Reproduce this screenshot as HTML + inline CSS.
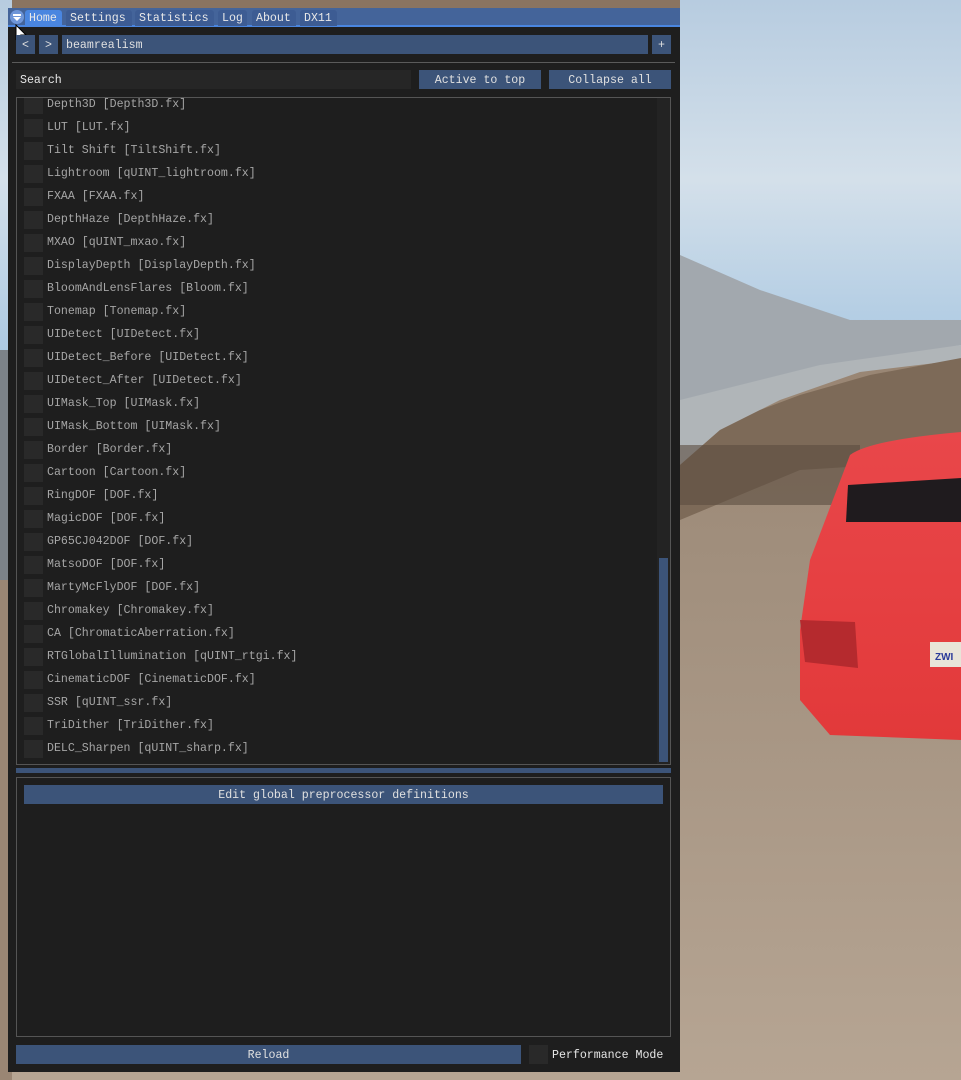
<!DOCTYPE html>
<html><head><meta charset="utf-8">
<style>
*{margin:0;padding:0;box-sizing:border-box}
body{width:961px;height:1080px;overflow:hidden;position:relative;background:#8a7a68;font-family:"Liberation Mono","DejaVu Sans Mono",monospace;font-size:11.6px;color:#e6e6e6}
.abs{position:absolute}
.win{left:8px;top:8px;width:672px;height:1064px;background:#1e1e1e}
.title{left:8px;top:8px;width:672px;height:19px;background:#44649a;border-bottom:2px solid #4a86e0}
.tab{position:absolute;top:10px;height:16px;background:#3d5c93;border-radius:3px 3px 0 0;color:#e8e8e8;line-height:17px;padding-left:4px}
.btn{position:absolute;background:#3c5479;color:#e0e0e0;text-align:center;line-height:21px;height:19px}
.item{position:absolute;left:24px;height:18px;width:640px;color:#a6a6a6;line-height:18px}
.item i{position:absolute;left:0;top:0;width:19px;height:18px;background:#292929}
.item span{position:absolute;left:23px;top:0;white-space:pre}
</style></head><body>
<svg class="abs" style="left:0;top:0" width="961" height="1080">
<defs>
<linearGradient id="sky" x1="0" y1="0" x2="0" y2="1"><stop offset="0" stop-color="#b7cce0"/><stop offset="0.5" stop-color="#d4e0ea"/><stop offset="1" stop-color="#aac8e2"/></linearGradient>
<linearGradient id="road" x1="0" y1="0" x2="0" y2="1"><stop offset="0" stop-color="#8a7461"/><stop offset="0.5" stop-color="#a08e7c"/><stop offset="1" stop-color="#b6a593"/></linearGradient>
<linearGradient id="car" x1="0" y1="0" x2="0" y2="1"><stop offset="0" stop-color="#e9474a"/><stop offset="1" stop-color="#e2393a"/></linearGradient>
</defs>
<rect width="961" height="1080" fill="url(#road)"/>
<rect x="680" y="0" width="281" height="360" fill="url(#sky)"/>
<rect x="0" y="0" width="12" height="360" fill="url(#sky)"/>
<polygon points="680,255 760,290 850,320 961,320 961,345 880,360 820,370 750,400 680,440" fill="#a2a8ae"/>
<polygon points="680,400 740,385 820,365 961,345 961,360 860,372 780,400 720,430 680,465" fill="#b0b5b8"/>
<polygon points="680,465 720,430 760,410 800,395 870,375 961,358 961,460 800,470 680,520" fill="#7d6a58"/>
<rect x="680" y="445" width="180" height="60" fill="#5b4d40" opacity="0.6"/>
<rect x="0" y="350" width="12" height="230" fill="#7c8288"/>
<rect x="0" y="580" width="12" height="500" fill="#9a8674"/>
<path d="M850,455 Q870,440 961,432 L961,740 L830,735 L800,700 L800,630 L810,560 Z" fill="url(#car)"/>
<path d="M848,485 L961,478 L961,522 L846,522 Z" fill="#1f1b1e"/>
<path d="M800,620 L855,622 L858,668 L805,662 Z" fill="#b52a2e"/>
<rect x="930" y="642" width="31" height="25" fill="#e8e4d8"/>
<text x="935" y="660" font-family="Liberation Sans" font-size="10" font-weight="bold" fill="#2a3a9a">ZWI</text>
</svg>
<div class="abs win"></div>
<div class="abs title"></div>
<div class="abs" style="left:10px;top:10px;width:14px;height:14px;border-radius:50%;background:#6f96d8"></div>
<div class="abs" style="left:13px;top:14px;width:8px;height:2px;background:#fff"></div>
<div class="abs" style="left:13px;top:17px;width:0;height:0;border-left:4px solid transparent;border-right:4px solid transparent;border-top:4px solid #fff"></div>
<div class="tab" style="left:25px;width:37px;background:#4a86e0">Home</div>
<div class="tab" style="left:66px;width:66px">Settings</div>
<div class="tab" style="left:135px;width:79px">Statistics</div>
<div class="tab" style="left:218px;width:29px">Log</div>
<div class="tab" style="left:252px;width:44px">About</div>
<div class="tab" style="left:300px;width:37px">DX11</div>
<svg class="abs" style="left:15px;top:24px" width="14" height="18"><path d="M1,1 L1,15 L4,12 L7,18 L9,17 L6,11 L11,11 Z" fill="#fff" stroke="#000" stroke-width="1"/></svg>
<div class="btn" style="left:16px;top:35px;width:19px">&lt;</div>
<div class="btn" style="left:39px;top:35px;width:19px">&gt;</div>
<div class="btn" style="left:62px;top:35px;width:586px;text-align:left;padding-left:4px">beamrealism</div>
<div class="btn" style="left:652px;top:35px;width:19px">+</div>
<div class="abs" style="left:12px;top:62px;width:663px;height:1px;background:#5a5a5a"></div>
<div class="abs" style="left:16px;top:70px;width:395px;height:19px;background:#262626;line-height:21px;padding-left:4px;color:#e6e6e6">Search</div>
<div class="btn" style="left:419px;top:70px;width:122px">Active to top</div>
<div class="btn" style="left:549px;top:70px;width:122px">Collapse all</div>
<div class="abs" style="left:16px;top:97px;width:655px;height:668px;border:1px solid #555;overflow:hidden">
 <div class="abs" style="left:640px;top:0;width:14px;height:666px;background:#232323"></div>
 <div class="abs" style="left:642px;top:460px;width:9px;height:204px;background:#3c5479"></div>
 <div style="position:absolute;left:-17px;top:-98px;width:700px;height:900px">
 <div class="item" style="top:96px"><i></i><span>Depth3D [Depth3D.fx]</span></div>
 <div class="item" style="top:119px"><i></i><span>LUT [LUT.fx]</span></div>
 <div class="item" style="top:142px"><i></i><span>Tilt Shift [TiltShift.fx]</span></div>
 <div class="item" style="top:165px"><i></i><span>Lightroom [qUINT_lightroom.fx]</span></div>
 <div class="item" style="top:188px"><i></i><span>FXAA [FXAA.fx]</span></div>
 <div class="item" style="top:211px"><i></i><span>DepthHaze [DepthHaze.fx]</span></div>
 <div class="item" style="top:234px"><i></i><span>MXAO [qUINT_mxao.fx]</span></div>
 <div class="item" style="top:257px"><i></i><span>DisplayDepth [DisplayDepth.fx]</span></div>
 <div class="item" style="top:280px"><i></i><span>BloomAndLensFlares [Bloom.fx]</span></div>
 <div class="item" style="top:303px"><i></i><span>Tonemap [Tonemap.fx]</span></div>
 <div class="item" style="top:326px"><i></i><span>UIDetect [UIDetect.fx]</span></div>
 <div class="item" style="top:349px"><i></i><span>UIDetect_Before [UIDetect.fx]</span></div>
 <div class="item" style="top:372px"><i></i><span>UIDetect_After [UIDetect.fx]</span></div>
 <div class="item" style="top:395px"><i></i><span>UIMask_Top [UIMask.fx]</span></div>
 <div class="item" style="top:418px"><i></i><span>UIMask_Bottom [UIMask.fx]</span></div>
 <div class="item" style="top:441px"><i></i><span>Border [Border.fx]</span></div>
 <div class="item" style="top:464px"><i></i><span>Cartoon [Cartoon.fx]</span></div>
 <div class="item" style="top:487px"><i></i><span>RingDOF [DOF.fx]</span></div>
 <div class="item" style="top:510px"><i></i><span>MagicDOF [DOF.fx]</span></div>
 <div class="item" style="top:533px"><i></i><span>GP65CJ042DOF [DOF.fx]</span></div>
 <div class="item" style="top:556px"><i></i><span>MatsoDOF [DOF.fx]</span></div>
 <div class="item" style="top:579px"><i></i><span>MartyMcFlyDOF [DOF.fx]</span></div>
 <div class="item" style="top:602px"><i></i><span>Chromakey [Chromakey.fx]</span></div>
 <div class="item" style="top:625px"><i></i><span>CA [ChromaticAberration.fx]</span></div>
 <div class="item" style="top:648px"><i></i><span>RTGlobalIllumination [qUINT_rtgi.fx]</span></div>
 <div class="item" style="top:671px"><i></i><span>CinematicDOF [CinematicDOF.fx]</span></div>
 <div class="item" style="top:694px"><i></i><span>SSR [qUINT_ssr.fx]</span></div>
 <div class="item" style="top:717px"><i></i><span>TriDither [TriDither.fx]</span></div>
 <div class="item" style="top:740px"><i></i><span>DELC_Sharpen [qUINT_sharp.fx]</span></div>
 </div>
</div>
<div class="abs" style="left:16px;top:768px;width:655px;height:5px;background:#3c5479"></div>
<div class="abs" style="left:16px;top:777px;width:655px;height:260px;border:1px solid #555"></div>
<div class="btn" style="left:24px;top:785px;width:639px">Edit global preprocessor definitions</div>
<div class="btn" style="left:16px;top:1045px;width:505px">Reload</div>
<div class="abs" style="left:529px;top:1045px;width:19px;height:19px;background:#292929"></div>
<div class="abs" style="left:552px;top:1045px;line-height:21px;color:#e6e6e6">Performance Mode</div>
</body></html>
